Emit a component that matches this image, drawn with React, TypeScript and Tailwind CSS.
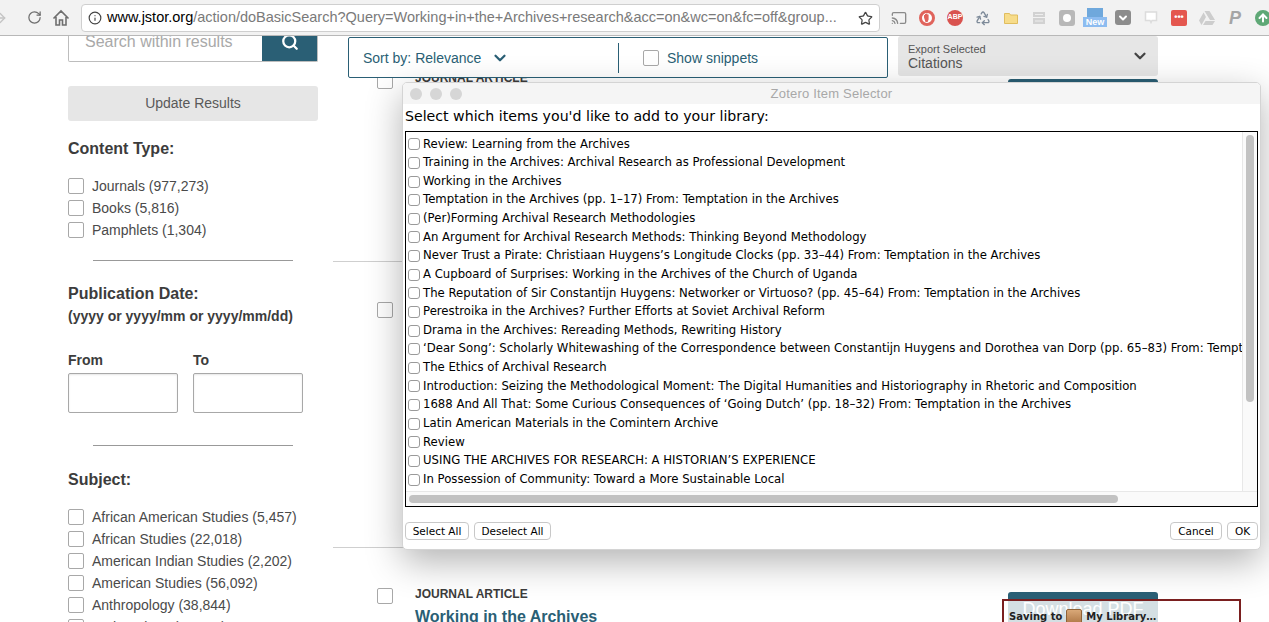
import React from 'react';
import { ArrowRight, ChevronDown, Info, Recycle, RotateCw, Search, Star, Cast, ArrowUp } from 'lucide-react';

const contentTypes = ['Journals (977,273)', 'Books (5,816)', 'Pamphlets (1,304)'];

const subjects = [
  'African American Studies (5,457)',
  'African Studies (22,018)',
  'American Indian Studies (2,202)',
  'American Studies (56,092)',
  'Anthropology (38,844)',
  'Archaeology (12,310)',
];

const items = [
  'Review: Learning from the Archives',
  'Training in the Archives: Archival Research as Professional Development',
  'Working in the Archives',
  'Temptation in the Archives (pp. 1–17) From: Temptation in the Archives',
  '(Per)Forming Archival Research Methodologies',
  'An Argument for Archival Research Methods: Thinking Beyond Methodology',
  'Never Trust a Pirate: Christiaan Huygens’s Longitude Clocks (pp. 33–44) From: Temptation in the Archives',
  'A Cupboard of Surprises: Working in the Archives of the Church of Uganda',
  'The Reputation of Sir Constantijn Huygens: Networker or Virtuoso? (pp. 45–64) From: Temptation in the Archives',
  'Perestroika in the Archives? Further Efforts at Soviet Archival Reform',
  'Drama in the Archives: Rereading Methods, Rewriting History',
  '‘Dear Song’: Scholarly Whitewashing of the Correspondence between Constantijn Huygens and Dorothea van Dorp (pp. 65–83) From: Temptation in the Archives',
  'The Ethics of Archival Research',
  'Introduction: Seizing the Methodological Moment: The Digital Humanities and Historiography in Rhetoric and Composition',
  '1688 And All That: Some Curious Consequences of ‘Going Dutch’ (pp. 18–32) From: Temptation in the Archives',
  'Latin American Materials in the Comintern Archive',
  'Review',
  'USING THE ARCHIVES FOR RESEARCH: A HISTORIAN’S EXPERIENCE',
  'In Possession of Community: Toward a More Sustainable Local',
];

const Box = () => <span className="block w-4 h-4 shrink-0 border border-[#a8a8a8] rounded-[2px] bg-white" />;

const Facet = ({ label }: { label: string }) => (
  <div className="flex items-center gap-2 h-[22px] text-sm text-[#4a4a4a]">
    <Box />
    <span>{label}</span>
  </div>
);

const ChromeBar = () => (
  <div className="flex items-center h-9 shrink-0 bg-[#f2f2f2] border-b border-[#b8b8b8] relative z-20 overflow-hidden">
    <ArrowRight className="w-4 h-4 text-[#c4c4c4] ml-[-8px] shrink-0" />
    <RotateCw className="w-[15px] h-[15px] text-[#6e6e6e] ml-[19px] shrink-0" />
    <svg viewBox="0 0 18 18" className="w-[18px] h-[18px] ml-[10px] shrink-0" fill="none" stroke="#6e6e6e" strokeWidth="1.6">
      <path d="M1.5 9.5 9 2l7.5 7.5M4 8v8h3.5v-5h3v5H14V8" />
    </svg>
    <div className="flex items-center ml-[11px] w-[799px] h-[28px] bg-white border border-[#cfcfcf] rounded-[4px] shrink-0 pl-[25px] relative">
      <Info className="w-[14px] h-[14px] text-[#444] absolute left-[6px] top-[6px]" />
      <span className="text-[14.5px] text-[#7a7a7a] whitespace-nowrap">
        <span className="text-black">www.jstor.org</span>/action/doBasicSearch?Query=Working+in+the+Archives+research&acc=on&wc=on&fc=off&group...
      </span>
      <Star className="w-[15px] h-[15px] text-[#444] absolute right-[6px] top-[6px]" />
    </div>
    <div className="flex items-center h-full">
      <Cast className="w-4 h-4 text-[#8a8a8a] ml-[11px] shrink-0" />
      <svg viewBox="0 0 16 16" className="w-4 h-4 ml-[12px] shrink-0">
        <circle cx="8" cy="8" r="6.5" fill="#fff" stroke="#e0645c" strokeWidth="3" />
        <path d="M5 7.5V5h1v2-3h1.2v3-3.5h1.2V7V4.5h1.2v5l-1 2.5H6.5z" fill="#e0645c" />
      </svg>
      <span className="ml-[12px] w-4 h-4 rounded-full bg-[#d9534f] text-white text-[7px] font-bold flex items-center justify-center shrink-0">ABP</span>
      <Recycle className="w-4 h-4 text-[#7d8a99] ml-[12px] shrink-0" />
      <svg viewBox="0 0 14 12" className="w-[14px] h-[12px] ml-[13px] shrink-0">
        <path d="M.5 1.5h5l1 1.5h7v8.500H.5z" fill="#f7dc8a" stroke="#e0bd5e" />
      </svg>
      <svg viewBox="0 0 12 12" className="w-3 h-3 ml-[15px] shrink-0">
        <path d="M0 0h12v5H0zM0 6h12v6H0z" fill="#d2d2d2" />
        <path d="M2 2.500h8M2 9h8" stroke="#eee" />
      </svg>
      <span className="ml-[14px] w-4 h-4 bg-[#b8b8b8] rounded-[3px] shrink-0 flex items-center justify-center">
        <span className="w-2 h-2 rounded-full bg-white" />
      </span>
      <span className="ml-[8px] w-6 shrink-0 flex flex-col items-center">
        <span className="block w-4 h-[9px] bg-[#6fa8dc]" />
        <span className="block w-6 h-[10px] bg-[#8dbcf0] text-white text-[9px] leading-[10px] font-bold text-center">New</span>
      </span>
      <span className="ml-[8px] w-4 h-[15px] bg-[#8c8c8c] rounded-[3px] shrink-0 flex items-center justify-center">
        <ChevronDown className="w-3 h-3 text-white" strokeWidth={4} />
      </span>
      <svg viewBox="0 0 14 14" className="w-[14px] h-[14px] ml-[13px] shrink-0">
        <path d="M1.500 1h11v8.500H8l-1 2-1-2H1.500z" fill="#fff" stroke="#dcdcdc" strokeWidth="1.500" />
      </svg>
      <span className="ml-[13px] w-4 h-4 bg-[#e4574f] rounded-[2px] text-white text-[9px] leading-[15px] text-center font-bold shrink-0">•••</span>
      <svg viewBox="0 0 16 14" className="w-4 h-[14px] ml-[12px] shrink-0">
        <path d="M5.500 0h5L16 9h-5zM4.600 1.500 7 6 2.500 14 0 9.500zM4 14l2.500-4H16l-2.500 4z" fill="#cdcdcd" />
      </svg>
      <span className="ml-[14px] w-[12px] text-[18px] leading-none font-bold italic text-[#a5a5a5] shrink-0">P</span>
      <span className="ml-[14px] w-4 h-4 rounded-full bg-[#5fa876] flex items-center justify-center shrink-0">
        <ArrowUp className="w-3 h-3 text-white" strokeWidth={4} />
      </span>
    </div>
  </div>
);

const Sidebar = () => (
  <aside className="w-[333px] shrink-0 pl-[68px] pr-[15px]">
    <div className="flex h-[26px] border border-t-0 border-[#bdbdbd] rounded-b-[2px]">
      <div className="flex-1 pl-4 text-base leading-[12px] text-[#a9a9a9]">Search within results</div>
      <div className="w-[55px] bg-[#2a5f75] flex justify-center overflow-hidden">
        <Search className="w-[18px] h-[18px] text-white -mt-[3px]" strokeWidth={3} />
      </div>
    </div>
    <div className="mt-6 h-[35px] pb-px bg-[#e6e6e6] rounded-[3px] flex items-center justify-center text-sm text-[#595959]">
      Update Results
    </div>
    <h3 className="mt-[18px] h-[20px] text-base leading-[20px] font-bold text-[#3c3c3c]">Content Type:</h3>
    <div className="mt-[16px]">
      {contentTypes.map((c) => <Facet key={c} label={c} />)}
    </div>
    <div className="mt-[19px] mx-[25px] h-px bg-[#999]" />
    <h3 className="mt-[23px] h-[20px] text-base leading-[20px] font-bold text-[#3c3c3c]">Publication Date:</h3>
    <p className="mt-[2px] text-sm leading-[20px] font-bold text-[#3c3c3c]">(yyyy or yyyy/mm or yyyy/mm/dd)</p>
    <div className="mt-[24px] flex gap-[15px]">
      {['From', 'To'].map((l) => (
        <div key={l} className="w-[110px]">
          <div className="h-[20px] text-sm leading-[20px] font-bold text-[#3c3c3c]">{l}</div>
          <div className="mt-[3px] h-[40px] border border-[#a8a8a8] rounded-[2px] shadow-[inset_0_1px_2px_rgba(0,0,0,0.1)]" />
        </div>
      ))}
    </div>
    <div className="mt-[32px] mx-[25px] h-px bg-[#999]" />
    <h3 className="mt-[24px] h-[20px] text-base leading-[20px] font-bold text-[#3c3c3c]">Subject:</h3>
    <div className="mt-[16px]">
      {subjects.map((s) => <Facet key={s} label={s} />)}
    </div>
  </aside>
);

const Main = () => (
  <main className="flex-1 min-w-0">
    <div className="flex items-start pl-[15px] relative z-[1]">
      <div className="flex items-center w-[540px] h-[41px] mt-px border border-[#2a5f75] rounded-[2px] pl-[14px] text-sm text-[#2a5f75] bg-white">
        <span className="w-[128px]">Sort by: Relevance</span>
        <ChevronDown className="w-[18px] h-[18px] text-[#2a5f75]" strokeWidth={3} />
        <span className="ml-[109px] w-px h-[30px] bg-[#2a5f75]" />
        <span className="ml-6"><Box /></span>
        <span className="ml-2">Show snippets</span>
      </div>
      <div className="ml-[10px] w-[260px] h-[40px] bg-[#e6e6e6] rounded-[3px] pl-[10px] pr-[9px] flex items-center justify-between text-[#555]">
        <div>
          <div className="text-[11px] leading-[11px] mt-[3px]">Export Selected</div>
          <div className="text-sm leading-[16px]">Citations</div>
        </div>
        <ChevronDown className="w-[18px] h-[18px] text-[#444]" strokeWidth={3} />
      </div>
    </div>
    <div className="h-[189px] border-b border-[#cfcfcf] mr-[96px]">
      <div className="flex pl-[44px] -mt-[5px] h-[16px] overflow-hidden">
        <Box />
        <span className="ml-[22px] text-xs font-bold text-[#3c3c3c] leading-[10px]">JOURNAL ARTICLE</span>
      </div>
      <div className="ml-[675px] w-[150px] h-[3px] -mt-[10px] bg-[#2a5f75] rounded-t-[3px]" />
    </div>
    <div className="h-[286px] border-b border-[#cfcfcf] mr-[96px] pl-[44px] pt-[40px]">
      <Box />
    </div>
    <div className="flex pl-[44px] pt-[40px] pr-[111px]">
      <Box />
      <div className="ml-[22px] flex-1">
        <div className="text-xs leading-[14px] font-bold text-[#3c3c3c] -mt-[1px]">JOURNAL ARTICLE</div>
        <div className="mt-[4px] text-base leading-[24px] font-bold text-[#2a5f75]">Working in the Archives</div>
      </div>
      <div className="w-[150px] h-[40px] mt-[4px] bg-[#2a5f75] rounded-t-[3px] text-white text-center text-lg leading-[34px]">Download PDF</div>
    </div>
  </main>
);

const ZoteroDialog = () => (
  <div className="absolute left-[402px] top-[82px] w-[859px] h-[468px] z-10 bg-white rounded-[5px] border border-[#d4d4d4] shadow-[0_12px_36px_rgba(0,0,0,0.3)] flex flex-col font-['DejaVu_Sans',sans-serif] overflow-hidden">
    <div className="h-[21px] shrink-0 bg-[#f5f5f5] flex items-center relative">
      <div className="flex gap-[8px] pl-[7px]">
        <span className="w-[12px] h-[12px] rounded-full bg-[#d6d6d6]" />
        <span className="w-[12px] h-[12px] rounded-full bg-[#d6d6d6]" />
        <span className="w-[12px] h-[12px] rounded-full bg-[#d6d6d6]" />
      </div>
      <span className="absolute inset-x-0 text-center text-[13px] text-[#a8a8a8] font-['Liberation_Sans',sans-serif] tracking-[0.2px]">Zotero Item Selector</span>
    </div>
    <div className="h-[27px] shrink-0 pl-[2px] text-[14.15px] leading-[25px] text-black">Select which items you'd like to add to your library:</div>
    <div className="mx-[2px] h-[376px] shrink-0 border border-black flex flex-col">
      <div className="flex-1 min-h-0 flex">
        <div className="flex-1 min-w-0 overflow-hidden pt-[3px]">
          {items.map((t) => (
            <div key={t} className="flex items-center h-[18.64px] pl-[2px] text-[11.7px] text-black whitespace-nowrap">
              <span className="block w-[12px] h-[12px] shrink-0 mr-[3px] border border-[#9a9a9a] rounded-[3px] bg-white" />
              {t}
            </div>
          ))}
        </div>
        <div className="w-[15px] shrink-0 bg-[#fafafa] border-l border-[#e8e8e8] pl-[3px] pt-[3px]">
          <div className="w-[8px] h-[267px] rounded-full bg-[#c2c2c2]" />
        </div>
      </div>
      <div className="h-[15px] shrink-0 bg-[#fafafa] border-t border-[#e8e8e8] pl-[3px] pt-[3px] pr-[15px]">
        <div className="w-[709px] h-[8px] rounded-full bg-[#c2c2c2]" />
      </div>
    </div>
    <div className="flex-1 flex items-start pt-[15px] gap-[5px] px-[2px] text-[10.5px] text-black text-center">
      <span className="w-[64px] h-[18px] border border-[#c8c8c8] rounded-[4px] leading-[17px] bg-white">Select All</span>
      <span className="w-[77px] h-[18px] border border-[#c8c8c8] rounded-[4px] leading-[17px] bg-white">Deselect All</span>
      <span className="ml-auto w-[52px] h-[18px] border border-[#c8c8c8] rounded-[4px] leading-[17px] bg-white">Cancel</span>
      <span className="w-[31px] h-[18px] border border-[#c8c8c8] rounded-[4px] leading-[17px] bg-white">OK</span>
    </div>
  </div>
);

const SavingPopup = () => (
  <div className="absolute left-[1002px] top-[599px] w-[239px] h-[40px] z-10 border-2 border-[#7a1f1f] bg-white/80 pl-[5px] pt-[8px] flex items-start gap-[4px] text-[10px] leading-[16px] font-bold text-[#222] font-['DejaVu_Sans',sans-serif]">
    Saving to
    <span className="w-[16px] h-[15px] bg-linear-to-b from-[#d9a878] to-[#b07a48] border border-[#8f6236] rounded-[2px]" />
    My Library…
  </div>
);

export default function App() {
  return (
    <div className="relative w-[1269px] h-[622px] overflow-hidden bg-white flex flex-col font-['Liberation_Sans',sans-serif]">
      <ChromeBar />
      <div className="flex">
        <Sidebar />
        <Main />
      </div>
      <ZoteroDialog />
      <SavingPopup />
    </div>
  );
}
